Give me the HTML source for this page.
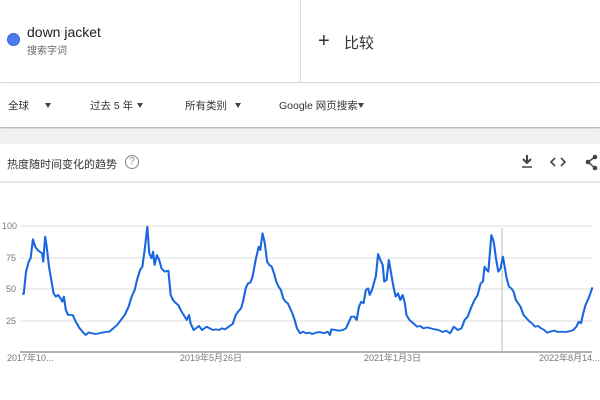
<!DOCTYPE html>
<html><head><meta charset="utf-8"><style>
*{margin:0;padding:0;box-sizing:border-box}
body{width:600px;height:400px;overflow:hidden;background:#fff;font-family:"Liberation Sans","Noto Sans CJK SC",sans-serif;position:relative;color:#202124}
.a{position:absolute}
.ar{position:absolute;top:103px;border-left:3.5px solid transparent;border-right:3.5px solid transparent;border-top:5px solid #444}
.f{position:absolute;top:98px;font-size:10.5px;color:#333}
</style></head><body>
<div class="a" style="left:0;top:0;width:600px;height:83px;background:#fff;border-bottom:1px solid #d6d6d6"></div>
<div class="a" style="left:300px;top:0;width:1px;height:82px;background:#dcdcdc"></div>
<div class="a" style="left:7px;top:33px;width:13px;height:13px;border-radius:50%;background:#4a7cf0;border:1px solid #3566d6"></div>
<div class="a" style="left:27px;top:24px;font-size:14px;color:#202124">down jacket</div>
<div class="a" style="left:27px;top:42px;font-size:10px;color:#666">搜索字词</div>
<div class="a" style="left:318px;top:29px;font-size:20px;color:#333;line-height:24px">+</div>
<div class="a" style="left:344px;top:32px;font-size:15px;color:#333">比较</div>
<div class="a" style="left:0;top:84px;width:600px;height:44px;background:#fff;border-bottom:1px solid #bbb;box-shadow:0 1px 2px #ccc"></div>
<div class="f" style="left:8px">全球</div>
<div class="f" style="left:90px">过去 5 年</div>
<div class="f" style="left:185px">所有类别</div>
<div class="f" style="left:279px">Google 网页搜索</div>
<div class="ar" style="left:45px"></div>
<div class="ar" style="left:137px"></div>
<div class="ar" style="left:235px"></div>
<div class="ar" style="left:358px"></div>
<div class="a" style="left:0;top:129px;width:600px;height:15px;background:#f1f1f1"></div>
<div class="a" style="left:0;top:181px;width:600px;height:2px;background:#e6e6e6"></div>
<div class="a" style="left:7px;top:156px;font-size:11px;color:#333">热度随时间变化的趋势</div>
<div class="a" style="left:125px;top:155px;width:14px;height:14px;border:1px solid #888;border-radius:50%;font-size:10px;color:#888;text-align:center;line-height:12px">?</div>
<svg class="a" style="left:520px;top:152px" width="80" height="22">
<path d="M7 3v7M3 7l4 4 4-4" stroke="#444" stroke-width="2" fill="none"/><path d="M2 15h10" stroke="#444" stroke-width="1.5"/>
<path d="M35 6l-4 4 4 4M41 6l4 4-4 4" stroke="#444" stroke-width="1.6" fill="none"/>
<circle cx="68" cy="10" r="2.3" fill="#444"/><circle cx="75" cy="5" r="2.3" fill="#444"/><circle cx="75" cy="16" r="2.3" fill="#444"/><path d="M68 10L75 5M68 10L75 16" stroke="#444" stroke-width="1.4"/>
</svg>
<svg class="a" style="left:0;top:0" width="600" height="400">
<g stroke="#ddd" stroke-width="1">
<line x1="20" y1="226" x2="592" y2="226"/><line x1="20" y1="258" x2="592" y2="258"/><line x1="20" y1="289" x2="592" y2="289"/><line x1="20" y1="321" x2="592" y2="321"/>
</g>
<line x1="20" y1="352" x2="592" y2="352" stroke="#999" stroke-width="1.5"/>
<line x1="502" y1="228" x2="502" y2="351" stroke="#bbb" stroke-width="1"/>
<g font-size="9" fill="#777" font-family="Liberation Sans,Noto Sans CJK SC,sans-serif">
<text x="2" y="229">100</text><text x="6" y="261">75</text><text x="6" y="292">50</text><text x="6" y="324">25</text>
<text x="7" y="361">2017年10...</text><text x="180" y="361">2019年5月26日</text><text x="364" y="361">2021年1月3日</text><text x="539" y="361">2022年8月14...</text>
</g>
<g transform="translate(0,200) scale(0.3827,0.33333)">
<polyline fill="none" stroke="#1a66e0" stroke-width="5.5" stroke-linejoin="round" points="58,280 62,282 68,215 75,185 80,175 86,118 92,140 98,150 104,155 110,160 113,185 118,110 122,140 128,200 134,240 140,280 146,290 152,285 158,295 163,305 167,290 172,330 178,345 190,345 198,365 208,385 218,398 224,405 232,397 240,400 250,402 258,400 266,398 276,396 286,395 296,385 306,375 316,360 326,345 336,320 344,290 352,270 358,240 366,210 372,200 378,150 385,80 390,160 396,175 400,155 404,195 410,165 416,180 422,205 430,215 440,212 446,285 452,300 460,310 466,315 472,330 480,345 488,360 494,345 498,370 506,390 512,385 520,378 528,390 534,385 540,380 548,385 556,390 564,388 572,390 580,385 588,388 600,378 608,372 616,345 622,335 630,325 636,300 642,265 648,250 654,248 660,230 668,180 676,140 680,150 686,100 692,130 698,185 704,195 710,200 716,220 722,245 728,260 734,270 740,295 746,305 752,310 758,325 764,340 770,360 776,385 784,400 792,395 800,400 808,398 816,402 826,398 836,396 846,400 856,395 862,405 866,388 876,390 886,392 896,390 904,385 910,370 918,350 926,350 932,360 938,320 944,305 950,310 956,270 962,265 966,285 972,270 978,245 982,230 988,162 994,180 1000,195 1004,245 1010,240 1016,180 1022,220 1028,260 1034,290 1040,280 1046,300 1052,285 1058,310 1062,345 1070,360 1080,370 1090,380 1098,378 1106,385 1116,382 1126,385 1136,388 1146,390 1156,396 1166,392 1176,400 1186,380 1196,390 1206,385 1214,360 1222,350 1232,320 1240,300 1248,285 1256,250 1262,245 1266,200 1272,210 1276,215 1284,105 1290,125 1296,175 1302,215 1308,205 1314,170 1318,195 1324,235 1330,260 1336,265 1342,275 1348,300 1354,310 1360,320 1368,345 1376,355 1384,365 1390,370 1398,380 1406,378 1414,385 1422,390 1430,398 1438,395 1448,392 1458,396 1468,395 1478,396 1488,394 1498,390 1506,380 1512,365 1518,370 1524,340 1530,315 1538,295 1548,262"/>
</g>
</svg>
</body></html>
